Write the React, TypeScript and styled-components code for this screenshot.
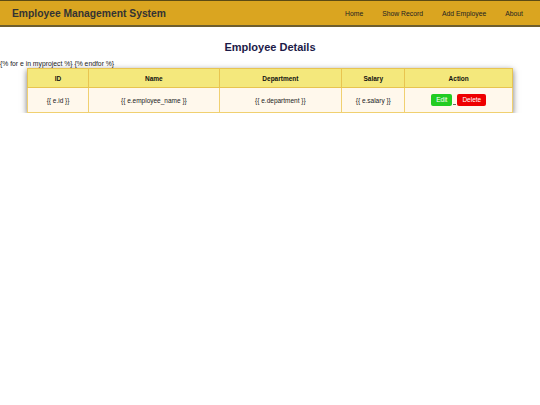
import React from 'react';
import styled, { createGlobalStyle } from 'styled-components';

const GlobalStyle = createGlobalStyle`
  body {
    margin: 0;
    font-family: "Liberation Sans", Arial, sans-serif;
    background: #fff;
  }
`;

const links = ['Home', 'Show Record', 'Add Employee', 'About'];
const columns = ['ID', 'Name', 'Department', 'Salary', 'Action'];

const App: React.FC = () => {
  return (
    <>
      <GlobalStyle />
      <Navbar>
        <Brand>Employee Management System</Brand>
        <NavLinks>
          {links.map((l) => (
            <NavLink key={l} href="#">{l}</NavLink>
          ))}
        </NavLinks>
      </Navbar>
      <Heading>Employee Details</Heading>
      <Template>{'{% for e in myproject %} {% endfor %}'}</Template>
      <Table>
        <thead>
          <tr>
            {columns.map((c) => (
              <Th key={c}>{c}</Th>
            ))}
          </tr>
        </thead>
        <tbody>
          <tr>
            <Td $w={61}>{'{{ e.id }}'}</Td>
            <Td $w={131}>{'{{ e.employee_name }}'}</Td>
            <Td $w={123}>{'{{ e.department }}'}</Td>
            <Td $w={63}>{'{{ e.salary }}'}</Td>
            <Td $w={108}>
              <ActionLink href="#"><Button $variant="edit">Edit</Button><Gap /></ActionLink>
              <ActionLink href="#"><Button $variant="delete">Delete</Button></ActionLink>
            </Td>
          </tr>
        </tbody>
      </Table>
    </>
  );
};

const Navbar = styled.nav`
  display: flex;
  align-items: center;
  justify-content: space-between;
  height: 24px;
  padding: 0 17px 0 12px;
  background: #daa520;
  border-top: 1px solid #5c4a14;
  border-bottom: 2px solid #6e5e2e;
`;

const Brand = styled.div`
  font-size: 10.3px;
  font-weight: 700;
  color: #333;
`;

const NavLinks = styled.div`
  display: flex;
  gap: 19px;
`;

const NavLink = styled.a`
  font-size: 6.8px;
  color: #222;
  text-decoration: none;
`;

const Heading = styled.h2`
  margin: 13px 0 0;
  text-align: center;
  font-size: 11px;
  line-height: 15px;
  color: #1c1a48;
`;

const Template = styled.p`
  margin: 5px 0 0;
  font-size: 6.8px;
  line-height: 8px;
  color: #222;
`;

const Table = styled.table`
  width: 486px;
  margin: 0 auto;
  border-collapse: collapse;
  border: 1px solid #e0b840;
  box-shadow: 0 2px 6px rgba(0, 0, 0, 0.55);
  font-size: 6.5px;
  color: #222;
`;

const Th = styled.th`
  height: 18px;
  padding: 0;
  background: #f4e87c;
  border: 1px solid #e8c450;
  font-weight: 700;
  color: #111;
`;

const Td = styled.td<{ $w: number }>`
  width: ${({ $w }) => $w}px;
  height: 24px;
  padding: 0;
  text-align: center;
  background: #fff8ec;
  border: 1px solid #f0d070;
`;

const ActionLink = styled.a`
  color: #333;
`;

const Gap = styled.span`
  display: inline-block;
  vertical-align: bottom;
  width: 3px;
  height: 0;
  margin: 0 1px 1px;
  border-bottom: 1px solid #666;
`;

const Button = styled.span<{ $variant: 'edit' | 'delete' }>`
  display: inline-block;
  vertical-align: bottom;
  padding: 2.5px 5px;
  border-radius: 2px;
  font-size: 6.5px;
  line-height: 7.5px;
  color: #fff;
  background: ${({ $variant }) => ($variant === 'edit' ? '#22cc22' : '#ee0000')};
`;

export default App;
